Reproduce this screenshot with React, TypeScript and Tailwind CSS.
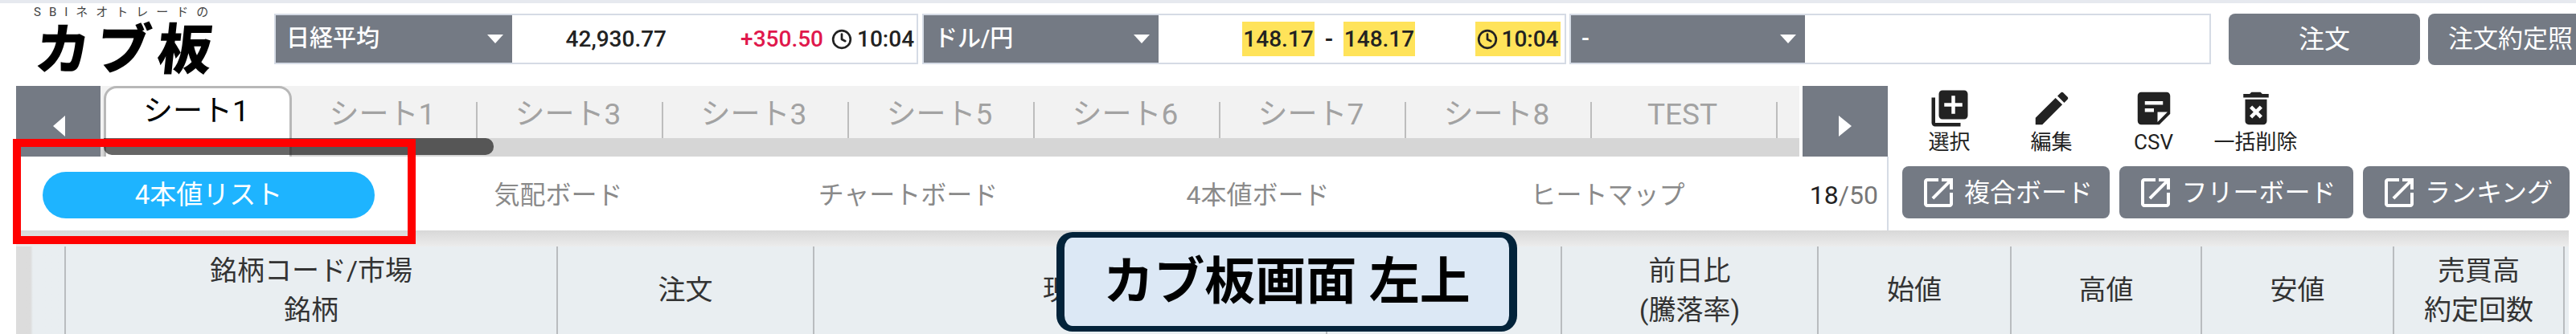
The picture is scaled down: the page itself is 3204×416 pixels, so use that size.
import React from 'react';
import { Clock } from 'lucide-react';

const sheetTabs = ['シート1', 'シート3', 'シート3', 'シート5', 'シート6', 'シート7', 'シート8', 'TEST'];
const boardTabs = ['気配ボード', 'チャートボード', '4本値ボード', 'ヒートマップ'];

const columns = [
  { width: 'w-[612px]', lines: ['銘柄コード/市場', '銘柄'] },
  { width: 'w-[319px]', lines: ['注文'] },
  { width: 'w-[638px]', lines: ['現値'] },
  { width: 'w-[292px]', lines: [] },
  { width: 'w-[319px]', lines: ['前日比', '(騰落率)'] },
  { width: 'w-[240px]', lines: ['始値'] },
  { width: 'w-[237px]', lines: ['高値'] },
  { width: 'w-[239px]', lines: ['安値'] },
  { width: 'w-[212px]', lines: ['売買高', '約定回数'] },
];

const MaterialIcon = ({ d, size = 54, className = '' }: { d: string; size?: number; className?: string }) => (
  <svg width={size} height={size} viewBox="0 0 24 24" fill="currentColor" className={className}>
    <path d={d} />
  </svg>
);

const toolItems = [
  {
    label: '選択',
    d: 'M4 6H2v14c0 1.1.9 2 2 2h14v-2H4V6zm16-4H8c-1.1 0-2 .9-2 2v12c0 1.1.9 2 2 2h12c1.1 0 2-.9 2-2V4c0-1.1-.9-2-2-2zm-1 9h-4v4h-2v-4H9V9h4V5h2v4h4v2z',
  },
  {
    label: '編集',
    d: 'M3 17.25V21h3.75L17.81 9.94l-3.75-3.75L3 17.25zM20.71 7.04c.39-.39.39-1.02 0-1.41l-2.34-2.34c-.39-.39-1.02-.39-1.41 0l-1.83 1.83 3.75 3.75 1.83-1.83z',
  },
  {
    label: 'CSV',
    d: 'M19 3H4.99C3.89 3 3 3.9 3 5l.01 14c0 1.1.89 2 1.99 2h10l6-6V5c0-1.1-.9-2-2-2zM7 8h10v2H7V8zm5 6H7v-2h5v2zm2 5.5V14h5.5L14 19.5z',
  },
  {
    label: '一括削除',
    d: 'M6 19c0 1.1.9 2 2 2h8c1.1 0 2-.9 2-2V7H6v12zm2.46-7.12 1.41-1.41L12 12.59l2.12-2.12 1.41 1.41L13.41 14l2.12 2.12-1.41 1.41L12 15.41l-2.12 2.12-1.41-1.41L10.59 14l-2.13-2.12zM15.5 4l-1-1h-5l-1 1H5v2h14V4h-3.5z',
  },
];

const openInNew =
  'M19 19H5V5h7V3H5c-1.11 0-2 .9-2 2v14c0 1.1.89 2 1.99 2H19c1.1 0 2-.9 2-2v-7h-2v7zM14 3v2h3.59l-9.83 9.83 1.41 1.41L19 6.41V10h2V3h-7z';

const TickerLabel = ({ text, width }: { text: string; width: string }) => (
  <div className={`${width} h-full bg-[#747a84] text-white text-[29px] font-medium flex items-center justify-between pl-[13px] pr-[11px] shrink-0`}>
    <span>{text}</span>
    <span className="w-0 h-0 border-x-[10px] border-x-transparent border-t-[11px] border-t-white" />
  </div>
);

const LinkButton = ({ text, width }: { text: string; width: string }) => (
  <button className={`${width} h-[65px] mt-[12px] bg-[#747a84] rounded-[8px] text-white text-[32px] flex items-center justify-center gap-[8px]`}>
    <MaterialIcon d={openInNew} size={48} />
    <span>{text}</span>
  </button>
);

export default function App() {
  return (
    <div className="relative w-[3204px] h-[416px] overflow-hidden bg-white flex flex-col font-['Roboto','Noto_Sans_CJK_JP',sans-serif] text-[#222]">
      <div className="h-[4px] bg-[#e6e9ef]" />

      {/* indexes and order buttons */}
      <div className="h-[103px] flex items-start">
        <div className="w-[341px] pl-[42px] pt-[1px] shrink-0">
          <div className="text-[15px] leading-[20px] tracking-[10px] text-[#444] whitespace-nowrap">SBIネオトレードの</div>
          <div className="-skew-x-6 ml-[2px] mt-[2px] text-[68px] leading-[72px] font-black tracking-[8px] text-black whitespace-nowrap">カブ板</div>
        </div>

        <div className="mt-[13px] w-[801px] h-[63px] border-2 border-[#d5dbe5] flex items-center text-[28px] shrink-0">
          <TickerLabel text="日経平均" width="w-[294px]" />
          <span className="w-[192px] text-right font-medium">42,930.77</span>
          <span className="w-[195px] text-right font-medium text-[#e0184c]">+350.50</span>
          <Clock size={26} strokeWidth={2.5} className="ml-[10px] shrink-0" />
          <span className="ml-[6px] font-medium">10:04</span>
        </div>

        <div className="mt-[13px] ml-[5px] w-[801px] h-[63px] border-2 border-[#d5dbe5] flex items-center text-[28px] font-medium shrink-0">
          <TickerLabel text="ドル/円" width="w-[292px]" />
          <span className="ml-[104px] w-[90px] h-[43px] bg-[#ffe35a] flex items-center justify-center">148.17</span>
          <span className="w-[36px] text-center font-bold">-</span>
          <span className="w-[89px] h-[43px] bg-[#ffe35a] flex items-center justify-center">148.17</span>
          <span className="ml-[75px] w-[106px] h-[43px] bg-[#ffe35a] flex items-center justify-center gap-[4px]">
            <Clock size={26} strokeWidth={2.5} className="shrink-0" />
            10:04
          </span>
        </div>

        <div className="mt-[13px] ml-[4px] w-[798px] h-[63px] border-2 border-[#d5dbe5] flex items-center shrink-0">
          <TickerLabel text="-" width="w-[291px]" />
        </div>

        <button className="mt-[13px] ml-[22px] w-[238px] h-[64px] bg-[#747a84] rounded-[8px] text-white text-[32px] shrink-0">注文</button>
        <button className="mt-[13px] ml-[10px] w-[240px] h-[64px] bg-[#747a84] rounded-l-[8px] text-white text-[31px] text-left pl-[25px] whitespace-nowrap shrink-0">注文約定照</button>
      </div>

      {/* sheet tabs and tools */}
      <div className="h-[88px] pl-[20px] flex shrink-0">
        <button className="w-[105px] h-full bg-[#747a84] flex items-center justify-center pt-[12px] pl-[2px]">
          <span className="w-0 h-0 border-y-[13px] border-y-transparent border-r-[15px] border-r-white" />
        </button>

        <div className="w-[2113px] h-full bg-[#f2f2f2] flex flex-col">
          <div className="h-[65px] flex pl-[4px] text-[37px] text-[#a2a2a2]">
            <div className="w-[234px] h-full bg-white border-x-[3px] border-t-[3px] border-[#b8b8b8] rounded-t-[16px] flex items-center justify-center text-black pb-[5px] pr-[4px] shrink-0">
              シート1
            </div>
            {sheetTabs.map((tab, i) => (
              <div key={i} className="w-[231px] h-[46px] mt-[20px] border-r-2 border-[#bdbdbd] flex items-center justify-center pb-[14px] pr-[4px] shrink-0">
                {tab}
              </div>
            ))}
          </div>
          <div className="relative h-[23px] bg-[#d6d6d6]">
            <div className="w-[234px] h-full ml-[4px] bg-white border-x-[3px] border-[#b8b8b8]" />
            <div className="absolute left-[4px] top-0 w-[485px] h-[21px] bg-black/60 rounded-b-[10px] rounded-r-[10px]" />
          </div>
        </div>

        <button className="ml-[4px] w-[106px] h-full bg-[#747a84] flex items-center justify-center pt-[12px]">
          <span className="w-0 h-0 border-y-[13px] border-y-transparent border-l-[16px] border-l-white" />
        </button>

        <div className="ml-[13px] flex">
          {toolItems.map((item) => (
            <div key={item.label} className="w-[127px] flex flex-col items-center text-[26px] text-[#222]">
              <MaterialIcon d={item.d} className="mt-[1px]" />
              <span className="leading-[30px]">{item.label}</span>
            </div>
          ))}
        </div>
      </div>

      {/* board tabs */}
      <div className="h-[92px] pl-[42px] flex shrink-0">
        <div className="w-[435px] pt-[19px] flex justify-center shrink-0">
          <div className="w-[413px] h-[58px] rounded-full bg-[#1eb4ff] text-white text-[33px] flex items-center justify-center">
            4本値リスト
          </div>
        </div>
        {boardTabs.map((tab) => (
          <div key={tab} className="w-[435px] pt-[4px] flex items-center justify-center text-[32px] text-[#8a8a8a] shrink-0">
            {tab}
          </div>
        ))}
        <div className="w-[130px] pt-[4px] pr-[11px] flex items-center justify-end text-[32px] text-[#777] shrink-0">
          <span className="text-[#222]">18</span>/50
        </div>
        <div className="border-l-2 border-[#d5dbe5] pl-[17px] flex gap-[12px]">
          <LinkButton text="複合ボード" width="w-[258px]" />
          <LinkButton text="フリーボード" width="w-[291px]" />
          <LinkButton text="ランキング" width="w-[257px]" />
        </div>
      </div>

      {/* table header */}
      <div className="mx-[20px] w-[3175px] h-[20px] bg-gradient-to-b from-[#d8d8d8] to-[#ececec] shrink-0" />
      <div className="mx-[20px] w-[3175px] h-[109px] bg-[#e9eef1] flex text-[34px] leading-[49px] text-[#333] shrink-0">
        <div className="w-[62px] h-full border-r-2 border-[#b9bcbf] bg-gradient-to-r from-[#dcdcdc] from-30% to-[#e9eef1] to-35%" />
        {columns.map((col, i) => (
          <div key={i} className={`${col.width} h-full border-r-2 border-[#b9bcbf] flex flex-col items-center justify-center`}>
            {col.lines.map((line) => (
              <span key={line}>{line}</span>
            ))}
          </div>
        ))}
      </div>

      {/* annotations on top of the screenshot */}
      <div className="absolute left-[16px] top-[173px] w-[501px] h-[131px] border-[10px] border-[#ff0000]" />
      <div className="absolute left-[1314px] top-[289px] w-[573px] h-[124px] border-x-[10px] border-y-[7px] border-[#03233a] rounded-[20px] bg-[#dce8f5] flex items-center justify-center text-[63px] font-bold text-black whitespace-nowrap">
        カブ板画面 左上
      </div>
    </div>
  );
}
